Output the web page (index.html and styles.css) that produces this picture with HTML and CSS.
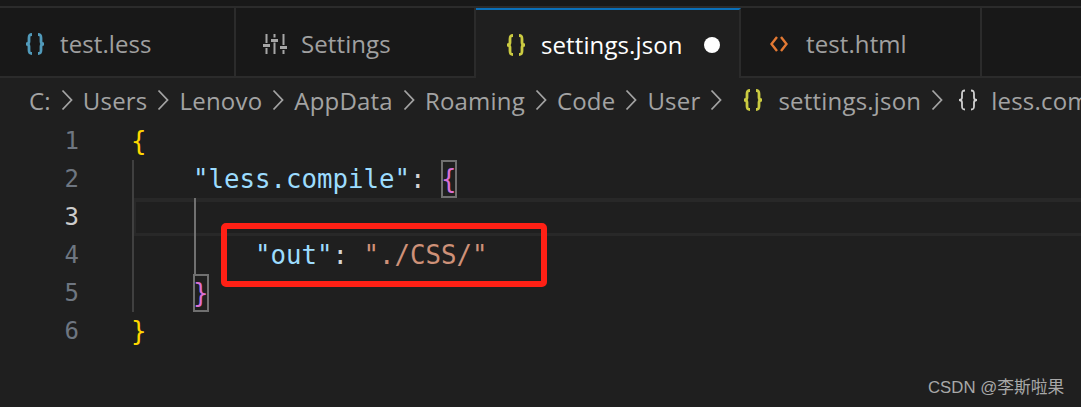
FILE: index.html
```html
<!DOCTYPE html>
<html lang="en">
<head>
<meta charset="utf-8">
<title>settings.json</title>
<link rel="stylesheet" href="styles.css">
</head>
<body>
<div class="app">
  <div class="titlestrip"></div>
  <div class="tabs">
    <div class="tab tab-less"><svg class="braces blue" viewBox="0 0 22 22"><path d="M8 1.500C5 1.500 5 3 5 5v3.500C5 10 4 11 2 11c2 0 3 1 3 2.500V17c0 2 0 3.500 3 3.500M14 1.500c3 0 3 1.500 3 3.500v3.500c0 1.500 1 2.500 3 2.500-2 0-3 1-3 2.500V17c0 2 0 3.500-3 3.500"/></svg><span>test.less</span></div>
    <div class="tab tab-settings">
      <svg class="sliders" width="24" height="20" viewBox="0 0 24 20"><path class="slider-line" d="M3.500 0v9M3.500 14v6M11.500 0v3.500M11.500 8.500V20M20.500 0v11M20.500 16v4"/><path class="slider-knob" d="M0 10h7v3H0zM8 5h7v3H8zM17 12h7v3h-7z"/></svg>
      <span>Settings</span>
    </div>
    <div class="tab tab-active"><svg class="braces yellow" viewBox="0 0 22 22"><path d="M8 1.500C5 1.500 5 3 5 5v3.500C5 10 4 11 2 11c2 0 3 1 3 2.500V17c0 2 0 3.500 3 3.500M14 1.500c3 0 3 1.500 3 3.500v3.500c0 1.500 1 2.500 3 2.500-2 0-3 1-3 2.500V17c0 2 0 3.500-3 3.500"/></svg><span class="name">settings.json</span><span class="dot"></span></div>
    <div class="tab tab-html"><span class="ficon"><svg width="18" height="20" viewBox="0 0 18 20" fill="none" stroke="#e37933" stroke-width="2.400"><path d="M7 3 1.500 10 7 17M11 3l5.500 7L11 17"/></svg></span><span>test.html</span></div>
    <div class="tab-rest"></div>
  </div>
  <div class="crumbs">
    <span>C:</span><svg class="chev" viewBox="0 0 12 22"><path d="M1.500 1.500 10.500 11 1.500 20.500"/></svg>
    <span>Users</span><svg class="chev" viewBox="0 0 12 22"><path d="M1.500 1.500 10.500 11 1.500 20.500"/></svg>
    <span>Lenovo</span><svg class="chev" viewBox="0 0 12 22"><path d="M1.500 1.500 10.500 11 1.500 20.500"/></svg>
    <span>AppData</span><svg class="chev" viewBox="0 0 12 22"><path d="M1.500 1.500 10.500 11 1.500 20.500"/></svg>
    <span>Roaming</span><svg class="chev" viewBox="0 0 12 22"><path d="M1.500 1.500 10.500 11 1.500 20.500"/></svg>
    <span>Code</span><svg class="chev" viewBox="0 0 12 22"><path d="M1.500 1.500 10.500 11 1.500 20.500"/></svg>
    <span>User</span><svg class="chev" viewBox="0 0 12 22"><path d="M1.500 1.500 10.500 11 1.500 20.500"/></svg>
    <svg class="braces crumb-file yellow" viewBox="0 0 22 22"><path d="M8 1.500C5 1.500 5 3 5 5v3.500C5 10 4 11 2 11c2 0 3 1 3 2.500V17c0 2 0 3.500 3 3.500M14 1.500c3 0 3 1.500 3 3.500v3.500c0 1.500 1 2.500 3 2.500-2 0-3 1-3 2.500V17c0 2 0 3.500-3 3.500"/></svg><span>settings.json</span><svg class="chev" viewBox="0 0 12 22"><path d="M1.500 1.500 10.500 11 1.500 20.500"/></svg>
    <svg class="braces crumb-obj" viewBox="0 0 22 22"><path d="M8 1.500C5 1.500 5 3 5 5v3.500C5 10 4 11 2 11c2 0 3 1 3 2.500V17c0 2 0 3.500 3 3.500M14 1.500c3 0 3 1.500 3 3.500v3.500c0 1.500 1 2.500 3 2.500-2 0-3 1-3 2.500V17c0 2 0 3.500-3 3.500"/></svg><span class="crumb-last">less.compile</span>
  </div>
  <div class="editor">
    <div class="gutter">
      <div>1</div><div>2</div><div class="current">3</div><div>4</div><div>5</div><div>6</div>
    </div>
    <div class="code">
      <div class="line"><span class="b1">{</span></div>
      <div class="line">    <span class="key">"less.compile"</span><span class="punc">: </span><span class="b2 match">{</span></div>
      <div class="line line-current"></div>
      <div class="line">        <span class="key">"out"</span><span class="punc">: </span><span class="str">"./CSS/"</span></div>
      <div class="line">    <span class="b2 match">}</span></div>
      <div class="line"><span class="b1">}</span></div>
      <div class="guide guide-outer"></div>
      <div class="guide guide-inner"></div>
    </div>
    <div class="redbox"></div>
  </div>
  <div class="mark">CSDN @李斯啦果</div>
</div>
</body>
</html>
```

FILE: styles.css
```css
* { box-sizing: border-box; }
html, body { margin: 0; height: 100%; background: #1f1f1f; overflow: hidden; }
.app { width: 1081px; height: 407px; position: relative; display: flex; flex-direction: column; overflow: hidden; font-family: "Open Sans", "Noto Sans", sans-serif; }
.titlestrip { height: 8px; flex: none; background: #181818; border-bottom: 2px solid #2b2b2b; }
.tabs { height: 70px; flex: none; display: flex; background: #181818; }
.tab { display: flex; align-items: center; font-size: 24px; letter-spacing: 0.1px; color: #a0a0a0; border-right: 2px solid #2b2b2b; border-bottom: 2px solid #2b2b2b; padding-top: 3px; }
.tab-less { width: 236px; padding-left: 24px; }
.tab-settings { width: 240px; padding-left: 27px; }
.tab-active { width: 265px; padding-left: 29px; padding-top: 1px; background: #1f1f1f; border-bottom: 0; border-top: 2px solid #0a6fb8; color: #fff; }
.tab-html { width: 241px; padding-left: 29px; }
.tab-rest { flex: 1; border-bottom: 2px solid #2b2b2b; }
.ficon { display: inline-flex; width: 36px; }
.braces { width: 22px; height: 22px; flex: none; fill: none; stroke: currentColor; stroke-width: 2.800; margin-right: 14px; }
.sliders { margin-right: 14px; flex: none; }
.slider-line { fill: none; stroke: #a6a6a6; stroke-width: 2; }
.slider-knob { fill: #a6a6a6; }
.blue { color: #519aba; }
.yellow { color: #cbcb41; }
.dot { width: 16px; height: 16px; border-radius: 50%; background: #fff; margin-left: 21px; }
.crumbs { height: 44px; flex: none; display: flex; align-items: center; padding-left: 29px; font-size: 24px; letter-spacing: 0.2px; color: #a3a3a3; white-space: nowrap; }
.chev { width: 12px; height: 22px; margin: 0 10px; flex: none; fill: none; stroke: #a3a3a3; stroke-width: 1.800; }
.crumb-file { margin-left: 10px; margin-right: 14px; }
.crumb-obj { margin-left: 4px; margin-right: 12px; color: #d0d0d0; stroke-width: 1.800; }
.editor { flex: 1; display: flex; position: relative; }
.gutter { width: 131px; flex: none; padding-right: 52px; font-family: "DejaVu Sans Mono", monospace; font-size: 24px; line-height: 38px; color: #6e7681; text-align: right; }
.gutter .current { color: #cccccc; }
.code { position: relative; flex: 1; font-family: "DejaVu Sans Mono", monospace; font-size: 25.75px; line-height: 38px; color: #d4d4d4; }
.line { height: 38px; white-space: pre; }
.line-current { margin-left: 2px; border: solid #282828; border-width: 4px 0 3px 3px; }
.key { color: #9cdcfe; }
.str { color: #ce9178; }
.punc { color: #d4d4d4; }
.b1 { color: #ffd700; }
.b2 { color: #da70d6; }
.match { outline: 2px solid #707070; outline-offset: -2px; display: inline-block; height: 38px; }
.guide { position: absolute; width: 2px; }
.guide-outer { left: 1px; top: 38px; height: 152px; background: #404040; }
.guide-inner { left: 63px; top: 76px; height: 76px; background: #707070; }
.redbox { position: absolute; left: 221px; top: 101px; width: 326px; height: 64px; border: 6px solid #ff2015; border-radius: 5px; }
.mark { position: absolute; left: 928px; top: 378px; font-family: "Liberation Sans", "Noto Sans CJK SC", sans-serif; font-size: 16.800px; line-height: 20px; color: #a8a8a8; white-space: nowrap; }
```
